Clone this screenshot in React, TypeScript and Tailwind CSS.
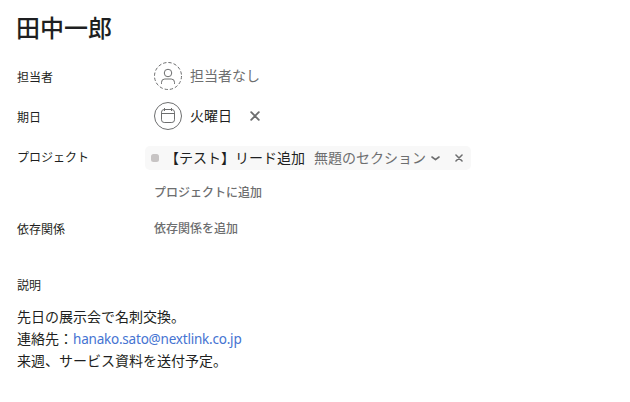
import React from 'react'

interface FieldRowProps {
  label: string
  className: string
  children: React.ReactNode
}

function FieldRow({ label, className, children }: FieldRowProps) {
  return (
    <div className={`flex items-start ${className}`}>
      <div className="w-[137px] shrink-0 pt-1.5 text-[12px] leading-5">{label}</div>
      {children}
    </div>
  )
}

function CloseIcon({ className }: { className: string }) {
  return (
    <svg className={className} viewBox="0 0 10 10" fill="none" stroke="currentColor" strokeLinecap="round">
      <path d="M1.2 1.2l7.6 7.6M8.8 1.2L1.2 8.8" strokeWidth={1.9} />
    </svg>
  )
}

function UnassignedIcon() {
  return (
    <svg className="w-7 h-7 shrink-0 text-[#6d6e6f]" viewBox="0 0 28 28" fill="none" stroke="currentColor">
      <circle cx="14" cy="14" r="13.5" strokeDasharray="3.3 2" />
      <circle cx="14" cy="11" r="3.75" />
      <path d="M7.5 21.5v-1.2a3.3 3.3 0 0 1 3.3-3.3h6.4a3.3 3.3 0 0 1 3.3 3.3v1.2" strokeLinecap="round" />
    </svg>
  )
}

function CalendarIcon() {
  return (
    <svg className="w-7 h-7 shrink-0 text-[#6d6e6f]" viewBox="0 0 28 28" fill="none" stroke="currentColor">
      <circle cx="14" cy="14" r="13.5" />
      <rect x="7.5" y="7.5" width="13" height="13" rx="2.7" />
      <path d="M7.5 11.5h13M10.5 6v3M17.5 6v3" />
    </svg>
  )
}

export default function App() {
  return (
    <div
      lang="ja"
      className="h-[402px] w-[630px] overflow-hidden bg-white pl-[17px] font-['Noto_Sans','Noto_Sans_CJK_JP',sans-serif] text-[#1e1f21]"
    >
      <h1 className="-ml-px h-[62px] pt-[12px] text-[24px] font-medium leading-8">田中一郎</h1>

      <FieldRow label="担当者" className="h-10">
        <UnassignedIcon />
        <span className="ml-2 text-[14px] leading-7 text-[#6d6e6f]">担当者なし</span>
      </FieldRow>

      <FieldRow label="期日" className="h-10">
        <CalendarIcon />
        <span className="ml-2 text-[14px] leading-7">火曜日</span>
        <button className="ml-[18px] mt-[9px] text-[#6d6e6f]" title="期日をクリア">
          <CloseIcon className="w-2.5 h-2.5" />
        </button>
      </FieldRow>

      <FieldRow label="プロジェクト" className="h-[72px]">
        <div className="pt-1">
          <div className="-ml-[9px] flex h-6 w-[326px] items-center rounded-[5px] bg-[#f8f8f8] pl-1.5 text-[14px] leading-6">
            <span className="h-2 w-2 shrink-0 rounded-[2.5px] bg-[#c7c4c4]" />
            <span className="ml-1.5 whitespace-nowrap">【テスト】リード追加</span>
            <span className="ml-[9px] whitespace-nowrap text-[#6d6e6f]">無題のセクション</span>
            <svg
              className="ml-[5px] h-[5px] w-[9px] shrink-0 text-[#6d6e6f]"
              viewBox="0 0 9 5"
              fill="none"
              stroke="currentColor"
              strokeWidth={1.6}
              strokeLinecap="round"
              strokeLinejoin="round"
            >
              <path d="M1 1l3.5 2.6L8 1" />
            </svg>
            <button className="ml-[15px] text-[#6d6e6f]" title="プロジェクトから削除">
              <CloseIcon className="h-2 w-2" />
            </button>
          </div>
          <button className="mt-[13px] block text-[12px] font-medium leading-5 text-[#6d6e6f]">プロジェクトに追加</button>
        </div>
      </FieldRow>

      <FieldRow label="依存関係" className="h-[56px]">
        <button className="pt-[5px] text-[12px] font-medium leading-5 text-[#6d6e6f]">依存関係を追加</button>
      </FieldRow>

      <div className="pt-1.5 text-[12px] leading-5">説明</div>
      <div className="mt-2.5 text-[14px] leading-[22px]">
        <p>先日の展示会で名刺交換。</p>
        <p>
          連絡先：<a className="text-[13.5px] tracking-[-0.21px] text-[#4573d2]">hanako.sato@nextlink.co.jp</a>
        </p>
        <p>来週、サービス資料を送付予定。</p>
      </div>
    </div>
  )
}
